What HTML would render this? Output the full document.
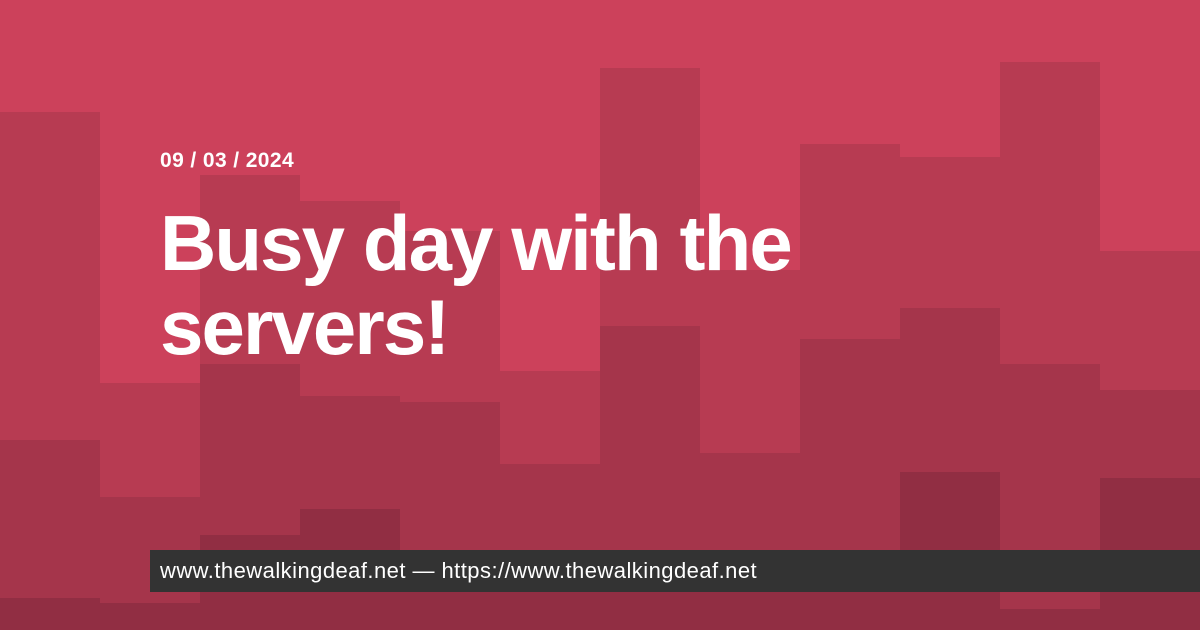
<!DOCTYPE html>
<html><head><meta charset="utf-8"><style>
html,body{margin:0;padding:0}
body{width:1200px;height:630px;position:relative;overflow:hidden;background:#CC415B;font-family:"Liberation Sans",Arial,sans-serif}
.b{position:absolute;width:100px}
.c1{background:#B73B52}.c2{background:#A5354B}.c3{background:#912E43}
.date{position:absolute;left:160px;top:149px;color:#fff;font-weight:bold;font-size:21px;letter-spacing:0.4px}
.title{position:absolute;left:160px;top:201px;color:#fff;font-weight:bold;font-size:78px;line-height:84px;letter-spacing:-1.9px;width:700px}
.bar{position:absolute;left:150px;top:550px;width:1050px;height:42px;background:#333}
.bar span{position:absolute;left:10px;top:8px;color:#fff;font-size:22px;letter-spacing:0.45px;white-space:nowrap}
</style></head><body>
<div id="bg"></div>
<div class="date">09 / 03 / 2024</div>
<div class="title">Busy day with the servers!</div>
<div class="bar"><span>www.thewalkingdeaf.net — https://www.thewalkingdeaf.net</span></div>
<script>
var d=[[112,440,598],[383,497,603],[175,364,535],[201,396,509],[231,402,550],[371,464,550],[68,326,592],[270,453,592],[144,339,592],[157,308,472],[62,364,609],[251,390,478]];
var h='';
d.forEach(function(c,i){
h+='<div class="b c1" style="left:'+i*100+'px;top:'+c[0]+'px;height:'+(c[1]-c[0])+'px"></div>';
h+='<div class="b c2" style="left:'+i*100+'px;top:'+c[1]+'px;height:'+(c[2]-c[1])+'px"></div>';
h+='<div class="b c3" style="left:'+i*100+'px;top:'+c[2]+'px;height:'+(630-c[2])+'px"></div>';
});
document.getElementById('bg').innerHTML=h;
</script>
</body></html>
